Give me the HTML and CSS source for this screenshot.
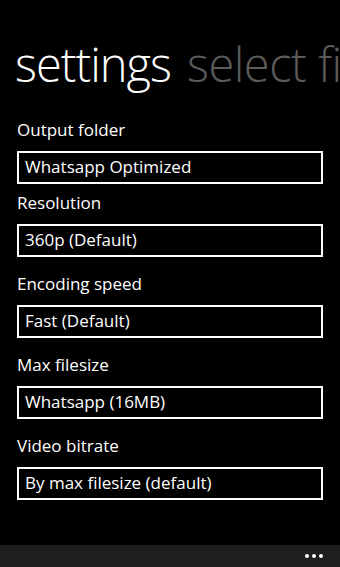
FILE: index.html
```html
<!DOCTYPE html>
<html>
<head>
<meta charset="utf-8">
<link rel="stylesheet" href="styles.css">
</head>
<body>
<div class="screen">
  <div class="header">
    <span class="title">settings</span>
    <span class="title title--next">select fil</span>
  </div>
  <div class="form">
    <div class="field field--first">
      <div class="label">Output folder</div>
      <div class="box">Whatsapp Optimized</div>
    </div>
    <div class="field">
      <div class="label">Resolution</div>
      <div class="box">360p (Default)</div>
    </div>
    <div class="field">
      <div class="label">Encoding speed</div>
      <div class="box">Fast (Default)</div>
    </div>
    <div class="field">
      <div class="label">Max filesize</div>
      <div class="box">Whatsapp (16MB)</div>
    </div>
    <div class="field">
      <div class="label">Video bitrate</div>
      <div class="box">By max filesize (default)</div>
    </div>
  </div>
  <div class="appbar">
    <span class="dots"><i></i><i></i><i></i></span>
  </div>
</div>
</body>
</html>
```
FILE: styles.css
```css
html, body {
  margin: 0;
  padding: 0;
  background: #000;
}
.screen {
  width: 340px;
  height: 567px;
  background: #000;
  color: #fff;
  font-family: "Open Sans", "Liberation Sans", sans-serif;
  display: flex;
  flex-direction: column;
  overflow: hidden;
}
.header {
  white-space: nowrap;
  padding-left: 15px;
  padding-top: 34px;
  height: 60px;
}
.title {
  font-size: 47px;
  font-weight: 300;
  line-height: 60px;
  letter-spacing: -1px;
}
.title--next {
  color: #5b5b5b;
  margin-left: 12px;
  letter-spacing: -0.5px;
}
.form {
  flex: 1;
  padding: 24px 17px 0 17px;
}
.field {
  margin-bottom: 15px;
}
.field--first {
  margin-bottom: 7px;
}
.label {
  font-size: 17px;
  line-height: 24px;
  margin-bottom: 9px;
}
.box {
  border: 2px solid #fff;
  height: 29px;
  padding: 0 6px;
  font-size: 17px;
  line-height: 27px;
}
.appbar {
  height: 22px;
  background: #1f1f1f;
  display: flex;
  justify-content: flex-end;
  align-items: center;
  padding-right: 17px;
}
.dots {
  display: flex;
  gap: 3px;
}
.dots i {
  width: 4px;
  height: 4px;
  border-radius: 50%;
  background: #fff;
  display: block;
}
```
